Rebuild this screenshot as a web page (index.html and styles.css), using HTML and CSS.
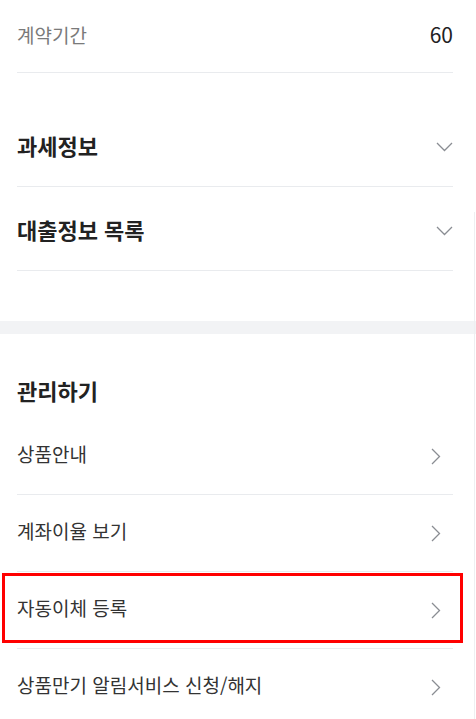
FILE: index.html
```html
<!DOCTYPE html>
<html lang="ko">
<head>
<meta charset="utf-8">
<title>계좌 관리</title>
<link rel="stylesheet" href="styles.css">
</head>
<body>
<div class="page">
  <section class="info">
    <div class="info-row">
      <span class="info-label">계약기간</span>
      <span class="info-value">60</span>
    </div>
  </section>

  <section class="accordion">
    <div class="acc-row">
      <span class="acc-title">과세정보</span>
      <svg class="chev-down" width="17" height="10" viewBox="0 0 17 10"><path d="M1 1 L8.5 8.5 L16 1" fill="none" stroke="#8a8d93" stroke-width="1.3"/></svg>
    </div>
    <div class="acc-row">
      <span class="acc-title">대출정보 목록</span>
      <svg class="chev-down" width="17" height="10" viewBox="0 0 17 10"><path d="M1 1 L8.5 8.5 L16 1" fill="none" stroke="#8a8d93" stroke-width="1.3"/></svg>
    </div>
  </section>

  <div class="divider"></div>

  <section class="manage">
    <h2 class="manage-title">관리하기</h2>
    <ul class="menu">
      <li class="menu-row"><span>상품안내</span><svg class="chev-right" width="10" height="17" viewBox="0 0 10 17"><path d="M1 1 L8.5 8.5 L1 16" fill="none" stroke="#8a8d93" stroke-width="1.3"/></svg></li>
      <li class="menu-row"><span>계좌이율 보기</span><svg class="chev-right" width="10" height="17" viewBox="0 0 10 17"><path d="M1 1 L8.5 8.5 L1 16" fill="none" stroke="#8a8d93" stroke-width="1.3"/></svg></li>
      <li class="menu-row highlighted"><span>자동이체 등록</span><svg class="chev-right" width="10" height="17" viewBox="0 0 10 17"><path d="M1 1 L8.5 8.5 L1 16" fill="none" stroke="#8a8d93" stroke-width="1.3"/></svg><span class="highlight-box"></span></li>
      <li class="menu-row"><span>상품만기 알림서비스 신청/해지</span><svg class="chev-right" width="10" height="17" viewBox="0 0 10 17"><path d="M1 1 L8.5 8.5 L1 16" fill="none" stroke="#8a8d93" stroke-width="1.3"/></svg></li>
    </ul>
  </section>
  <div class="edge-line"></div>
</div>
</body>
</html>
```
FILE: styles.css
```css
html, body {
  margin: 0;
  padding: 0;
  background: #ffffff;
}
body {
  font-family: "Noto Sans CJK KR", "Noto Sans", sans-serif;
  color: #222222;
  overflow: hidden;
}
.page {
  position: relative;
  width: 476px;
  min-height: 719px;
}
.info {
  margin: 0 23px 0 17px;
}
.info-row {
  height: 68px;
  padding-bottom: 4px;
  display: flex;
  align-items: center;
  justify-content: space-between;
  border-bottom: 1px solid #e9ebee;
}
.info-label {
  font-size: 19px;
  color: #7a7a7a;
}
.info-value {
  font-size: 21px;
  color: #222222;
}
.accordion {
  margin: 30px 23px 0 17px;
}
.acc-row {
  height: 82px;
  padding-top: 1px;
  display: flex;
  align-items: center;
  justify-content: space-between;
  border-bottom: 1px solid #e9ebee;
}
.acc-title {
  font-size: 22px;
  font-weight: 700;
  color: #222222;
}
.chev-down {
  display: block;
  margin-top: 4px;
}
.divider {
  margin-top: 50px;
  height: 13px;
  background: #f2f3f5;
}
.manage {
  padding-top: 41px;
}
.manage-title {
  margin: 0 23px 13px 17px;
  font-size: 22px;
  font-weight: 700;
  line-height: 30px;
  color: #222222;
}
.menu {
  list-style: none;
  margin: 0 23px 0 17px;
  padding: 0;
}
.menu-row {
  position: relative;
  height: 71px;
  padding-bottom: 5px;
  display: flex;
  align-items: center;
  justify-content: space-between;
  border-bottom: 1px solid #e9ebee;
  font-size: 19px;
  color: #333333;
}
.menu-row:last-child {
  border-bottom: none;
}
.chev-right {
  display: block;
  margin-right: 12px;
  margin-top: 5px;
}
.highlight-box {
  position: absolute;
  top: 1px;
  bottom: 5px;
  left: -15px;
  right: -10px;
  border: 3px solid #ff0000;
}
.edge-line {
  position: absolute;
  top: 212px;
  bottom: 0;
  right: 1px;
  width: 1px;
  background: #eeeff1;
}
```
